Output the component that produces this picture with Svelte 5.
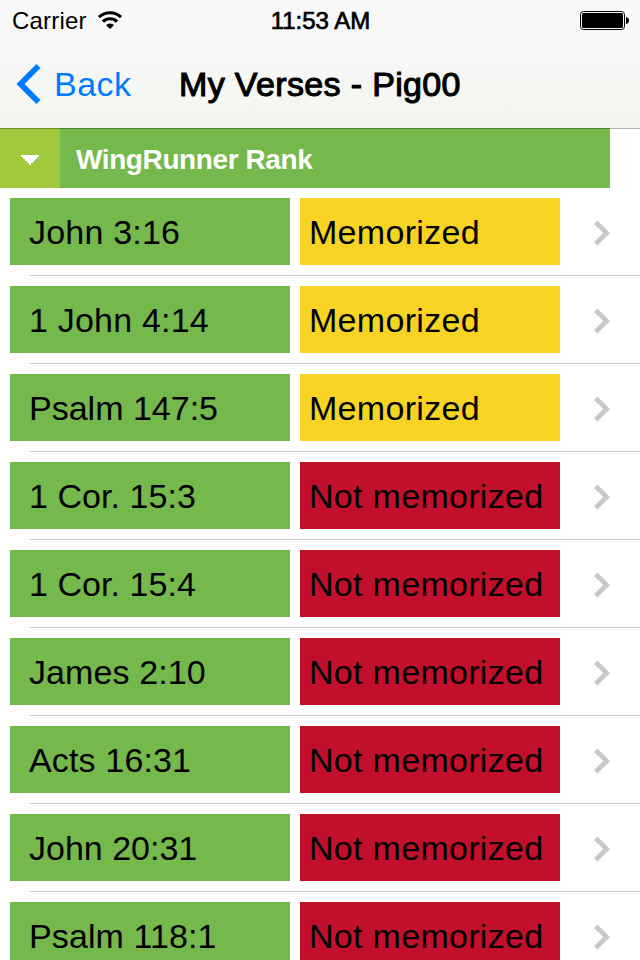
<script lang="ts">
  type Verse = { ref: string; memorized: boolean; spacing: number };

  // spacing is the tracking of each label, in px
  const verses: Verse[] = [
    { ref: "John 3:16", memorized: true, spacing: 0.2 },
    { ref: "1 John 4:14", memorized: true, spacing: 0.2 },
    { ref: "Psalm 147:5", memorized: true, spacing: 0 },
    { ref: "1 Cor. 15:3", memorized: false, spacing: 0.05 },
    { ref: "1 Cor. 15:4", memorized: false, spacing: 0.05 },
    { ref: "James 2:10", memorized: false, spacing: 0.1 },
    { ref: "Acts 16:31", memorized: false, spacing: 0.15 },
    { ref: "John 20:31", memorized: false, spacing: 0 },
    { ref: "Psalm 118:1", memorized: false, spacing: 0.1 },
  ];
</script>

<div class="screen">
  <header class="top">
    <div class="status">
      <div class="carrier">
        <span>Carrier</span>
        <svg width="26" height="19" viewBox="0 0 26 19">
          <g fill="none" stroke="#000" stroke-width="3.1">
            <path d="M2 6.2 A16 16 0 0 1 24 6.2" />
            <path d="M6 10.6 A10 10 0 0 1 20 10.6" />
          </g>
          <path d="M9 14 A6 6 0 0 1 17 14 L13 18 Z" />
        </svg>
      </div>
      <span class="time">11:53 AM</span>
      <svg class="battery" width="49" height="19" viewBox="0 0 49 19">
        <rect x="0.5" y="0.5" width="44" height="18" rx="3" fill="none" stroke="#000" />
        <rect x="2" y="2" width="41" height="15" rx="1.5" />
        <path d="M46 6 Q49 6.5 49 9.5 Q49 12.5 46 13 Z" />
      </svg>
    </div>
    <div class="nav">
      <button class="back">
        <svg width="26" height="42" viewBox="0 0 26 42">
          <path d="M22.5 3 L4.5 21 L22.5 39" fill="none" stroke="#007aff" stroke-width="5.8" />
        </svg>
        <span>Back</span>
      </button>
      <h1>My Verses - Pig00</h1>
    </div>
  </header>

  <div class="section">
    <div class="toggle">
      <svg width="18" height="10" viewBox="0 0 18 10" shape-rendering="crispEdges">
        <path d="M0 0H18V2H16V4H14V6H12V8H10V10H8V8H6V6H4V4H2V2H0Z" fill="#fff" />
      </svg>
    </div>
    <h2>WingRunner Rank</h2>
  </div>

  <ul>
    {#each verses as verse}
      <li>
        <div class="ref" style="letter-spacing: {verse.spacing}px">{verse.ref}</div>
        <div class="state" class:missing={!verse.memorized}>
          {verse.memorized ? "Memorized" : "Not memorized"}
        </div>
        <svg class="chevron" width="18" height="26" viewBox="0 0 18 26">
          <path d="M3.7 2.2 L14.700 13 L3.7 23.800" fill="none" stroke="#c7c7cc" stroke-width="4.8" />
        </svg>
      </li>
    {/each}
  </ul>
</div>

<style>
  :global(body) { margin: 0; background: #fff; }
  .screen {
    width: 640px; height: 960px; overflow: hidden;
    background: #fff; color: #000;
    font-family: "Liberation Sans", Arial, sans-serif;
    display: flex; flex-direction: column;
  }
  .top {
    height: 128px; flex: none;
    background: linear-gradient(#f8f8f8 0, #f8f8f8 40px, #f5f7f3 90px, #f0f4ed 128px);
  }
  .status {
    height: 40px; padding: 0 11px 0 12px;
    display: grid; grid-template-columns: 1fr auto 1fr; align-items: start;
  }
  .carrier { display: flex; align-items: flex-start; gap: 10px; font-size: 24px; line-height: 42px; }
  .carrier span { letter-spacing: 0.2px; }
  .carrier svg { margin-top: 11px; }
  .time { font-size: 24px; line-height: 42px; -webkit-text-stroke: 0.7px #000; }
  .battery { justify-self: end; margin-top: 11px; }
  .nav { height: 88px; display: flex; align-items: center; }
  .back {
    display: flex; align-items: center; gap: 12px;
    margin: 0; padding: 0 0 0 16px; border: none; background: none;
    width: 179px; height: 88px; color: #007aff;
    font: 34px "Liberation Sans", Arial, sans-serif; letter-spacing: 0.5px;
  }
  h1 {
    margin: 0; font-size: 34px; font-weight: 400; line-height: 88px; letter-spacing: 0.35px;
    white-space: nowrap; -webkit-text-stroke: 1.1px #000;
  }
  /* the nav bar hairline shows through on top of the section header */
  .section {
    height: 60px; flex: none; display: flex; color: #fff;
    background: linear-gradient(90deg, #75b84c 610px, #fff 610px);
    box-shadow: inset 0 1px 0 rgba(0,0,0,0.3);
  }
  .toggle {
    width: 60px; display: flex; align-items: center; justify-content: center;
    background: #a0c83b; box-shadow: inset 0 1px 0 rgba(0,0,0,0.3);
  }
  .toggle svg { margin-top: 4px; }
  h2 {
    margin: 0; padding: 2px 0 0 16px; font-size: 28px; font-weight: 700;
    line-height: 60px; letter-spacing: -0.4px; white-space: nowrap;
  }
  ul { list-style: none; margin: 0; padding: 0; }
  li {
    height: 88px; box-sizing: border-box; padding: 10px 30px 0 10px;
    display: flex; align-items: flex-start; gap: 10px;
    background: linear-gradient(#c8c7cc, #c8c7cc) 30px 87px / 610px 1px no-repeat;
  }
  .ref, .state {
    height: 67px; box-sizing: border-box; line-height: 68px;
    font-size: 34px; white-space: nowrap;
  }
  .ref { width: 280px; padding-left: 19px; background: #75b84c; }
  .state { width: 260px; padding-left: 9px; background: #f7d323; letter-spacing: 0.3px; }
  .state.missing { background: #c20f2c; }
  .chevron { margin: 21.5px 0 0 auto; }
</style>
